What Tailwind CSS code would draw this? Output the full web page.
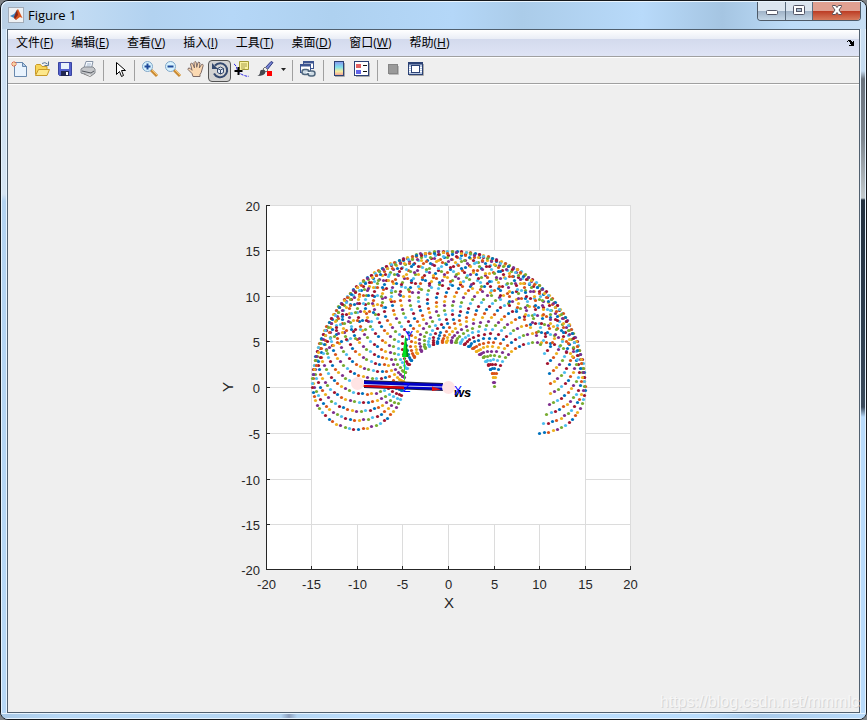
<!DOCTYPE html>
<html lang="zh-CN">
<head>
    <meta charset="UTF-8">
    <meta name="viewport" content="width=device-width, initial-scale=1.0">
    <title>Figure 1</title>
    <script src="https://cdn.jsdelivr.net/npm/@tailwindcss/browser@4"></script>
</head>
<body class="bg-[#7f8387] font-['Open_Sans','Noto_Sans_CJK_SC',sans-serif] text-xs text-black">

    <div class="min-h-screen flex flex-col rounded-lg overflow-hidden border border-[#15181c] bg-[#b7d8f6]">

        <!-- Title bar -->
        <header class="h-7 flex items-start justify-between border-t border-l border-[#eaf5fe] rounded-tl-lg bg-[linear-gradient(to_right,#b9cfe4_0px,#c3dcf3_70px,#b2d2f0_150px,#b5d7f7_230px,#aed1f0_330px,#b4d7f8_450px,#abcce9_520px,#b8dafa_640px,#a5c5e2_720px,#bddcf8_790px,#c8dff4_866px)]">
            <div class="flex items-center gap-1 pl-1.5 pt-[3px]">
                <svg class="w-4 h-5" viewBox="0 0 16 20">
                    <rect x=".5" y="2.500" width="15" height="15" fill="#eef1f4" stroke="#a2acb8"/>
                    <path d="M2 11l4-2 3-4 2 5-3 5-2-2z" fill="#3f86c2"/>
                    <path d="M6 13l3-8 1-1 2 4 2.500 5-2.500-1-4 3z" fill="#d9541e"/>
                    <path d="M6 12l3-7 1 5-3 4z" fill="#84251a"/>
                </svg>
                <h1 class="text-[13px] leading-5">Figure 1</h1>
            </div>
            <div class="flex h-[19px] mr-[5px] rounded-b border border-t-0 border-[#4d5a68] overflow-hidden">
                <button type="button" aria-label="Minimize" class="w-7 border-r border-[#5b6c7e] bg-linear-to-b from-[#dce6f0] from-50% via-[#9fb2c6] via-50% to-[#c4d6e6] flex items-center justify-center">
                    <svg width="14" height="14" viewBox="0 0 14 14"><rect x="1.500" y="6.500" width="11" height="4" rx="1" fill="#fff" stroke="#535666"/></svg>
                </button>
                <button type="button" aria-label="Maximize" class="w-[27px] border-r border-[#5b6c7e] bg-linear-to-b from-[#dce6f0] from-50% via-[#9fb2c6] via-50% to-[#c4d6e6] flex items-center justify-center">
                    <svg width="14" height="14" viewBox="0 0 14 14"><rect x="1.500" y="1.500" width="11" height="9" rx="1" fill="#fff" stroke="#535666"/><rect x="4.500" y="4.500" width="5" height="3" fill="#a9bdd0" stroke="#535666"/></svg>
                </button>
                <button type="button" aria-label="Close" class="w-[47px] bg-linear-to-b from-[#e0a091] from-50% via-[#bb3a22] via-50% to-[#d67a5c] flex items-center justify-center">
                    <svg width="14" height="14" viewBox="0 0 14 14"><path d="M2.500 1.500h3l1.500 2 1.500-2h3v1l-2.500 3.500 2.500 3.500v1h-3l-1.500-2-1.500 2h-3v-1l2.500-3.500-2.500-3.500z" fill="#fff" stroke="#5a5058"/></svg>
                </button>
            </div>
        </header>

        <div class="flex-1 flex">
            <div class="w-1.5 border-l border-r border-[#e6f3fe] bg-[linear-gradient(#cadff3_0px,#d5e4f2_165px,#b3d3f1_172px,#b7d8f6_600px)]"></div>

            <main class="flex-1 flex flex-col border border-[#51606f] bg-[#efefef]">

                <nav class="h-[27px] flex items-center justify-between border-b border-[#a0a0a0] bg-[linear-gradient(#ffffff_0px,#e9edf6_9px,#d3daed_9px,#dfe4f5_26px)]">
                    <div class="flex gap-[18px] pl-2">
                        <button type="button">文件(<u>F</u>)</button>
                        <button type="button">编辑(<u>E</u>)</button>
                        <button type="button">查看(<u>V</u>)</button>
                        <button type="button">插入(<u>I</u>)</button>
                        <button type="button">工具(<u>T</u>)</button>
                        <button type="button">桌面(<u>D</u>)</button>
                        <button type="button">窗口(<u>W</u>)</button>
                        <button type="button">帮助(<u>H</u>)</button>
                    </div>
                    <button type="button" aria-label="Dock figure" class="mr-1">
                        <svg width="8" height="8" viewBox="0 0 8 8"><path d="M0 2h1V1h3v1h1v1h1V2h1v5H2V6h2V5H3V3H2V2H1v1H0z" fill="#000"/></svg>
                    </button>
                </nav>

                <div class="h-[27px] flex items-center border-t border-t-white border-b border-b-[#a0a0a0]">
                    <button type="button" aria-label="New figure" class="w-[23px] h-[23px] pr-px pb-[3px] flex items-center justify-center">
                        <svg width="18" height="18" viewBox="0 0 18 18">
                            <path d="M4.500 2.500h8l4 4v10h-12z" fill="#e9f3fd" stroke="#6888ad"/>
                            <path d="M12.500 2.500v4h4z" fill="#b5cfea" stroke="#6888ad"/>
                            <path d="M4 1v6M1 4h6M2 2l4 4M6 2L2 6" stroke="#e0694a"/><circle cx="4" cy="4" r="1.500" fill="#fbd69a"/>
                        </svg>
                    </button>
                    <button type="button" aria-label="Open file" class="w-[23px] h-[23px] pr-px pb-[3px] flex items-center justify-center">
                        <svg width="18" height="18" viewBox="0 0 18 18">
                            <path d="M2.500 14.500v-9l1-1h4l1.500 2h5v3" fill="#f8d559" stroke="#c99a28"/>
                            <path d="M2.500 15.500l3-6h11l-2.500 6z" fill="#fde88c" stroke="#c99a28"/>
                            <path d="M9 3.500q3-2 5.500.5M15.500 1.500v4h-4" fill="none" stroke="#5c7896"/>
                        </svg>
                    </button>
                    <button type="button" aria-label="Save figure" class="w-[23px] h-[23px] pr-px pb-[3px] flex items-center justify-center">
                        <svg width="18" height="18" viewBox="0 0 18 18">
                            <path d="M2.500 2.500h13v13h-12l-1-1z" fill="#5361cc" stroke="#3a44a0"/>
                            <rect x="5" y="3" width="8" height="6" fill="#e9f3fb"/>
                            <rect x="5" y="11" width="8" height="5" fill="#20264e"/><rect x="10" y="12" width="2" height="3" fill="#fff"/>
                        </svg>
                    </button>
                    <button type="button" aria-label="Print figure" class="w-[23px] h-[23px] pr-px pb-[3px] flex items-center justify-center">
                        <svg width="18" height="18" viewBox="0 0 18 18">
                            <path d="M5 8l2-6.500h7L12.500 8z" fill="#f5f9fe" stroke="#8794a6"/>
                            <path d="M8 4h4M7.500 6h4" stroke="#a3b6cc"/>
                            <path d="M2 9l3-2h9l2 2v4l-4 3-10-3z" fill="#c5c7ca" stroke="#83888f"/>
                            <path d="M3 11l9 2 3-2" fill="none" stroke="#54585f"/><path d="M5 14l6 2.500 2-1.500" fill="#fff" stroke="#888"/>
                        </svg>
                    </button>

                    <span class="w-2 flex"><i class="ml-[3px] w-px h-[21px] bg-[#a0a0a0]"></i></span>

                    <button type="button" aria-label="Edit plot" class="w-[23px] h-[23px] pb-[3px] flex items-center justify-center">
                        <svg width="18" height="18" viewBox="0 0 18 18"><path d="M5.500 2.500v12l3-3 2 5 2-1-2-5h4z" fill="#fff" stroke="#000"/></svg>
                    </button>

                    <span class="w-2 flex"><i class="ml-[3px] w-px h-[21px] bg-[#a0a0a0]"></i></span>

                    <button type="button" aria-label="Zoom in" class="w-[23px] h-[23px] pr-px pb-[3px] flex items-center justify-center">
                        <svg width="18" height="18" viewBox="0 0 18 18">
                            <path d="M10 10l6 6" stroke="#c98a34" stroke-width="3"/><path d="M10.500 9.500l6 6" stroke="#f8c870"/>
                            <circle cx="6.500" cy="6.500" r="5" fill="#d9f3fe" stroke="#80a6c8"/><path d="M6.500 3.500v6M3.500 6.500h6" stroke="#1f4a9a" stroke-width="2"/>
                        </svg>
                    </button>
                    <button type="button" aria-label="Zoom out" class="w-[23px] h-[23px] pr-px pb-[3px] flex items-center justify-center">
                        <svg width="18" height="18" viewBox="0 0 18 18">
                            <path d="M10 10l6 6" stroke="#c98a34" stroke-width="3"/><path d="M10.500 9.500l6 6" stroke="#f8c870"/>
                            <circle cx="6.500" cy="6.500" r="5" fill="#d9f3fe" stroke="#80a6c8"/><path d="M3.500 6.500h6" stroke="#1f4a9a" stroke-width="2"/>
                        </svg>
                    </button>
                    <button type="button" aria-label="Pan" class="w-[23px] h-[23px] pr-px pb-[3px] flex items-center justify-center">
                        <svg width="18" height="18" viewBox="0 0 18 18">
                            <path d="M6 16.500l-1-3-4-4 .5-1.500 1.500.3 2 2L3.500 4l1-1 1.200.7L7.500 8 7 2.500l1-1 1.200.8.5 5L11 2.500l1-.5 1 1-.7 5L14.500 4.500l1.200-.2.5 1.200-2 7-1.200 2v2z" fill="#fbd9b2" stroke="#7d6a66"/>
                        </svg>
                    </button>
                    <button type="button" aria-label="Rotate 3D" aria-pressed="true" class="w-[23px] h-[22px] pb-0.5 flex items-center justify-center rounded border border-[#535353] bg-[#d3d3d3]">
                        <svg width="18" height="18" viewBox="0 0 18 18">
                            <path d="M4 4.500a7 7 0 1 1-1 8" fill="none" stroke="#34496f" stroke-width="2"/>
                            <path d="M1 2v6h6z" fill="#34496f"/>
                            <path d="M6.500 7.500l3-1.500 3 1.500v4l-3 1.500-3-1.500zM6.500 7.500l3 1.500 3-1.500M9.500 9v4" fill="#e4ecf8" stroke="#34496f"/>
                        </svg>
                    </button>
                    <button type="button" aria-label="Data cursor" class="w-[23px] h-[23px] pr-px pb-[3px] flex items-center justify-center">
                        <svg width="18" height="18" viewBox="0 0 18 18">
                            <path d="M1 4q2 1 3 5t6 6 6 1" fill="none" stroke="#2a22e0" stroke-dasharray="3 1"/>
                            <path d="M6.500 1.500h9v8h-6l-2 1.500-1-1.500z" fill="#fbf3a0" stroke="#a39a35"/><path d="M8 4h6M8 6h6M8 8h4" stroke="#aaa04c"/>
                            <path d="M5.500 7v8M1.500 11h8" stroke="#000" stroke-width="2"/>
                        </svg>
                    </button>
                    <button type="button" aria-label="Brush" class="w-[23px] h-[23px] pr-px pb-[3px] flex items-center justify-center">
                        <svg width="18" height="18" viewBox="0 0 18 18">
                            <path d="M9 8l6-6.500 2 1L11 10z" fill="#7785d5" stroke="#303a80"/><path d="M7 9l2-2 3 3-2 2z" fill="#eee" stroke="#777"/>
                            <path d="M1 16q3-1 3-4t4-2l1.500 2Q9 16 1 16z" fill="#454950"/>
                            <rect x="11" y="11" width="5" height="5" fill="#f00"/>
                        </svg>
                    </button>
                    <button type="button" aria-label="Brush options" class="w-3 h-[23px] pb-[3px] flex items-center justify-center">
                        <svg width="5" height="3" viewBox="0 0 5 3"><path d="M0 0h5L2.500 3z" fill="#222"/></svg>
                    </button>

                    <span class="w-2 flex"><i class="ml-[3px] w-px h-[21px] bg-[#a0a0a0]"></i></span>

                    <button type="button" aria-label="Link plot" class="w-[23px] h-[23px] pr-px pb-[3px] flex items-center justify-center">
                        <svg width="18" height="18" viewBox="0 0 18 18">
                            <rect x="4.500" y="1.500" width="10" height="7" fill="#fff" stroke="#3c5590"/><path d="M4 2.500h11" stroke="#3c5590" stroke-width="2"/>
                            <rect x="1.500" y="4.500" width="10" height="8" fill="#fff" stroke="#3c5590"/><path d="M1 5.500h11" stroke="#3c5590" stroke-width="2"/>
                            <rect x="3" y="9.500" width="7" height="5" rx="2.500" fill="#cfdce6" stroke="#50677e" stroke-width="1.500"/>
                            <rect x="9" y="11" width="7" height="5" rx="2.500" fill="#cfdce6" stroke="#50677e" stroke-width="1.500"/><path d="M7 12.500h5" stroke="#eef5fa"/>
                        </svg>
                    </button>

                    <span class="w-2 flex"><i class="ml-[3px] w-px h-[21px] bg-[#a0a0a0]"></i></span>

                    <button type="button" aria-label="Insert colorbar" class="w-[23px] h-[23px] pr-px pb-[3px] flex items-center justify-center">
                        <svg width="18" height="18" viewBox="0 0 18 18">
                            <defs><linearGradient id="bar" x2="0" y2="1"><stop stop-color="#8795ed"/><stop offset=".4" stop-color="#80e0ec"/><stop offset=".7" stop-color="#f4efa0"/><stop offset="1" stop-color="#f29a96"/></linearGradient></defs>
                            <path d="M5 16.500h9.500V3" fill="none" stroke="#aaa"/><rect x="4.500" y="1.500" width="9" height="14" fill="url(#bar)" stroke="#2c4275"/>
                        </svg>
                    </button>
                    <button type="button" aria-label="Insert legend" class="w-[23px] h-[23px] pr-px pb-[3px] flex items-center justify-center">
                        <svg width="18" height="18" viewBox="0 0 18 18">
                            <path d="M3 16.500h13.500V3" fill="none" stroke="#aaa"/><rect x="1.500" y="1.500" width="14" height="14" fill="#fff" stroke="#2c4275"/>
                            <rect x="3" y="4" width="5" height="4" fill="#e36161"/><rect x="3" y="10" width="5" height="4" fill="#6164e8"/>
                            <path d="M10 5.500h4M10 11.500h4" stroke="#111"/>
                        </svg>
                    </button>

                    <span class="w-2 flex"><i class="ml-[3px] w-px h-[21px] bg-[#a0a0a0]"></i></span>

                    <button type="button" aria-label="Hide plot tools" class="w-[23px] h-[23px] pr-px pb-[3px] flex items-center justify-center">
                        <svg width="18" height="18" viewBox="0 0 18 18"><path d="M5 14.500h9.500V6" fill="none" stroke="#bbb"/><rect x="4.500" y="4.500" width="9" height="9" fill="#9a9a9a" stroke="#858585"/></svg>
                    </button>
                    <button type="button" aria-label="Show plot tools" class="w-[23px] h-[23px] pr-px pb-[3px] flex items-center justify-center">
                        <svg width="18" height="18" viewBox="0 0 18 18">
                            <path d="M2 15.500h14.500V4" fill="none" stroke="#aaa"/><rect x="1.500" y="2.500" width="14" height="12" fill="#b9c9e4" stroke="#2c4275"/><path d="M1 3.500h15" stroke="#2c4275" stroke-width="2"/>
                            <rect x="4.500" y="5.500" width="8" height="7" fill="#fff" stroke="#2c4275"/><path d="M2 7.500h2M2 9.500h2M2 11.500h2M13 7.500h2M13 9.500h2M13 11.500h2" stroke="#fff"/>
                        </svg>
                    </button>
                </div>

                <!-- Figure canvas -->
                <section class="flex-1 flex flex-col items-center justify-between border-t border-white pt-[110px]">
                    <svg width="437" height="420" viewBox="215 195 437 420" class="font-['Liberation_Sans',sans-serif]" role="img" aria-label="Robot workspace">
                        <rect x="266" y="205" width="365" height="365" fill="#fff"/>
                        <g id="grid" stroke="#dcdcdc"></g>
                        <!-- floor tile -->
                        <rect x="312" y="251" width="273" height="273" fill="#fff"/>
                        <path d="M266.500 205v364.500H631" fill="none" stroke="#262626"/>
                        <g id="ticks" stroke="#262626"></g>
                        <g id="labels" fill="#262626" font-size="13"></g>
                        <text x="449" y="608" font-size="15" fill="#262626" text-anchor="middle">X</text>
                        <text transform="translate(233 387) rotate(-90)" font-size="15" fill="#262626" text-anchor="middle">Y</text>

                        <g id="points"></g>

                        <!-- links -->
                        <path d="M364 380l79 3v8l-79-3z" fill="#20204a"/>
                        <path d="M364 381l79 3v6l-79-3z" fill="#0000c4"/>
                        <path d="M364 384.500l40 1.500 39 1" fill="none" stroke="#d8d8f4"/>
                        <path d="M364 385l40 1.500v2.500l-40-2z" fill="#dc0000"/>
                        <path d="M432 386.500l9 3-9 1.500z" fill="#e01010"/>
                        <path d="M404.500 380v-24" stroke="#30e830"/>
                        <path d="M405.500 335l3 22h-6.500z" fill="#00e020"/>
                        <path d="M405.500 335l3 22h-2z" fill="#078a12"/>
                        <circle cx="357.500" cy="383.500" r="6.500" fill="#ffe4e4"/>
                        <circle cx="448.500" cy="387.500" r="6.500" fill="#ffe4e4"/>
                        <text x="454" y="397" font-size="13" font-weight="bold" font-style="italic">ws</text>
                        <g fill="#0000ff" font-size="12">
                            <text x="405" y="340">Y</text>
                            <text x="403" y="392">Z</text>
                            <text x="454" y="395">X</text>
                        </g>
                    </svg>
                    <p class="self-end pb-0.5 font-['Liberation_Sans',sans-serif] text-base leading-4 text-[#f6f6f6] [text-shadow:1px_1px_0_#d6d6d6]">https://blog.csdn.net/mmmlc</p>
                </section>
            </main>

            <div class="w-1.5 border-l border-r border-[#e6f3fe] bg-[linear-gradient(#cbdff2_0px,#c5dbf0_42px,#69727d_50px,#7d868f_110px,#c3cacd_169px,#22303f_171px,#2f3f50_300px,#3b4b5c_378px,#b9dbfb_388px)]"></div>
        </div>

        <footer class="h-1.5 border-b border-t border-[#e6f3fe] bg-[linear-gradient(to_right,#a9c9e6_0px,#b7d8f6_60px,#b4d5f2_280px,#8c9fbd_288px,#b4d5f2_296px,#bcdefe_360px,#b9dcfc_700px,#a9caea_760px,#b9dbfb_866px)]"></footer>
    </div>

    <script>
        const colors = ['#0072bd', '#d95319', '#edb120', '#7e2f8e', '#77ac30', '#4dbeee', '#a2142f'];
        const xs = [266.5, 311.5, 357.5, 402.5, 448.5, 494.5, 539.5, 585.5, 630.5];
        const ys = [569.5, 524.5, 479.5, 433.5, 387.5, 341.5, 296.5, 250.5, 205.5];

        let grid = '';
        let ticks = '';
        let labels = '';
        for (let i = 0; i < 9; i++) {
            const v = -20 + i * 5;
            grid += `<path d="M${xs[i]} 205V570M266 ${ys[i]}H631"/>`;
            ticks += `<path d="M${xs[i]} 570v-4M266 ${ys[i]}h4"/>`;
            labels += `<text x="${xs[i]}" y="589" text-anchor="middle">${v}</text>`;
            labels += `<text x="260" y="${ys[i] + 5}" text-anchor="end">${v}</text>`;
        }
        document.getElementById('grid').innerHTML = grid;
        document.getElementById('ticks').innerHTML = ticks;
        document.getElementById('labels').innerHTML = labels;

        // reachable points of a two-link arm, lengths 10 and 5
        let points = '';
        let n = 0;
        for (let i = 0; i < 32; i++) {
            for (let k = 0; k < 48; k++) {
                const t1 = i * 0.1;
                const t2 = t1 - Math.PI / 2 + k * 0.1;
                const x = 10 * Math.cos(t1) + 5 * Math.cos(t2);
                const y = 10 * Math.sin(t1) + 5 * Math.sin(t2);
                const cx = Math.floor(448.7 + x * 9.1) + 0.5;
                const cy = Math.floor(387.5 - y * 9.1) + 0.5;
                points += `<circle cx="${cx}" cy="${cy}" r="1.600" fill="${colors[Math.max(n - 1, 0) % 7]}"/>`;
                n++;
            }
        }
        document.getElementById('points').innerHTML = points;
    </script>

</body>
</html>
